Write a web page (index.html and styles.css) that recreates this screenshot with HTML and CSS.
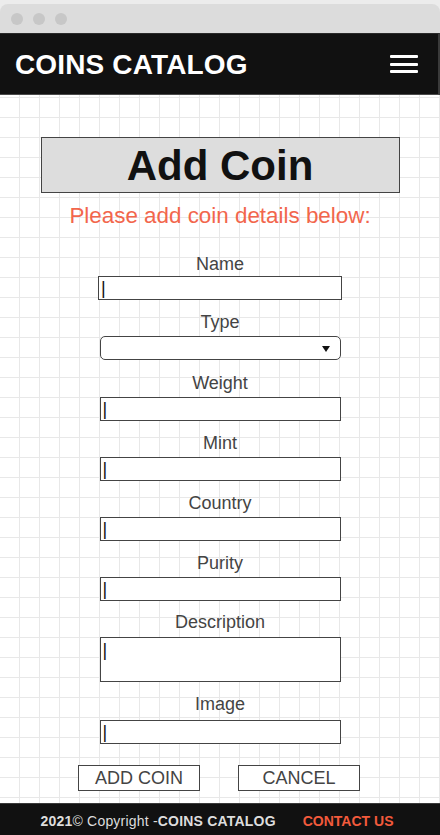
FILE: index.html
```html
<!DOCTYPE html>
<html lang="en">
<head>
<meta charset="utf-8">
<title>Coins Catalog - Add Coin</title>
<link rel="stylesheet" href="styles.css">
</head>
<body>
<div class="chrome">
  <span class="dot"></span><span class="dot"></span><span class="dot"></span>
</div>
<header class="topbar">
  <div class="brand">COINS CATALOG</div>
  <button class="menu" type="button" aria-label="Menu"><span></span><span></span><span></span></button>
</header>
<main class="content">
  <h1 class="title">Add Coin</h1>
  <p class="subtitle">Please add coin details below:</p>
  <form class="form">
    <div class="field field-name">
      <label class="label">Name</label>
      <input class="control control-name" type="text" placeholder="|">
    </div>
    <div class="field">
      <label class="label">Type</label>
      <div class="select-wrap"><select class="control select"><option></option></select></div>
    </div>
    <div class="field field-weight">
      <label class="label">Weight</label>
      <input class="control" type="text" placeholder="|">
    </div>
    <div class="field">
      <label class="label">Mint</label>
      <input class="control" type="text" placeholder="|">
    </div>
    <div class="field">
      <label class="label">Country</label>
      <input class="control" type="text" placeholder="|">
    </div>
    <div class="field">
      <label class="label">Purity</label>
      <input class="control" type="text" placeholder="|">
    </div>
    <div class="field field-desc">
      <label class="label">Description</label>
      <textarea class="control textarea" placeholder="|"></textarea>
    </div>
    <div class="field field-image">
      <label class="label">Image</label>
      <input class="control" type="text" placeholder="|">
    </div>
    <div class="actions">
      <button class="btn" type="button">ADD COIN</button>
      <button class="btn" type="button">CANCEL</button>
    </div>
  </form>
</main>
<footer class="footer">
  <span class="copy"><b>2021</b>© Copyright -<b>COINS CATALOG</b></span>
  <a class="contact" href="#">CONTACT US</a>
</footer>
</body>
</html>
```
FILE: styles.css
```css
* { box-sizing: border-box; }
html, body { margin: 0; padding: 0; }
body {
  height: 835px;
  display: flex;
  flex-direction: column;
  background: #ececec;
  font-family: "Liberation Sans", Arial, sans-serif;
  overflow: hidden;
}
.chrome {
  margin-top: 4px;
  height: 29px;
  flex-shrink: 0;
  background: #dcdcdc;
  border-radius: 8px 8px 0 0;
  display: flex;
  align-items: center;
  gap: 10px;
  padding-left: 11px;
}
.dot {
  width: 12px;
  height: 12px;
  border-radius: 50%;
  background: #c7c7c7;
}
.topbar {
  height: 62px;
  flex-shrink: 0;
  background: #111;
  border-top: 1px solid #2a2a2a;
  border-bottom: 1px solid #4a4a4a;
  border-right: 2px solid #3a3a3a;
  display: flex;
  align-items: center;
  justify-content: space-between;
  padding: 0 20px 0 15px;
}
.brand {
  color: #fff;
  font-weight: bold;
  font-size: 28px;
  line-height: 28px;
  padding-top: 2px;
  letter-spacing: 0.15px;
}
.menu {
  background: none;
  border: 0;
  padding: 0;
  width: 28px;
  display: flex;
  flex-direction: column;
  gap: 4.5px;
}
.menu span {
  display: block;
  height: 3px;
  width: 28px;
  background: #fff;
  border-radius: 1px;
}
.content {
  flex: 1;
  background-color: #fff;
  background-image:
    linear-gradient(#e8e8e8 1px, transparent 1px),
    linear-gradient(90deg, #e8e8e8 1px, transparent 1px);
  background-size: 20px 20px;
  background-position: -1px 2px;
  padding-top: 42px;
}
.title {
  margin: 0 auto;
  width: 359px;
  height: 56px;
  border: 1px solid #444;
  background: #ddd;
  color: #111;
  font-size: 42px;
  line-height: 56px;
  font-weight: bold;
  text-align: center;
}
.subtitle {
  margin: 10px 0 0;
  font-size: 22.4px;
  line-height: 25px;
  color: #f2664c;
  text-align: center;
}
.form {
  margin-top: 26px;
}
.field {
  margin-top: 12px;
  display: flex;
  flex-direction: column;
  align-items: center;
  gap: 4px;
}
.field-name { margin-top: 0; gap: 2px; }
.field-weight { margin-top: 13px; }
.field-desc { margin-top: 11px; gap: 5px; }
.field-image { gap: 6px; }
.label {
  display: block;
  font-size: 18px;
  line-height: 20px;
  color: #444;
  text-align: center;
}
.control {
  display: block;
  width: 241px;
  height: 24px;
  margin: 0;
  border: 1px solid #444;
  border-radius: 0;
  background: #fff;
  padding: 0 2px;
  font-family: "Liberation Sans", Arial, sans-serif;
  font-size: 18px;
  color: #111;
  outline: none;
}
.control::placeholder { color: #111; opacity: 1; }
.control-name { width: 244px; }
.textarea {
  height: 45px;
  resize: none;
  padding: 2px 2px;
  line-height: 20px;
  overflow: hidden;
}
.select-wrap {
  position: relative;
  width: 241px;
}
.select {
  appearance: none;
  -webkit-appearance: none;
  border-radius: 5px;
  width: 100%;
}
.select-wrap::after {
  content: "";
  position: absolute;
  right: 11px;
  top: 10px;
  border-left: 4px solid transparent;
  border-right: 4px solid transparent;
  border-top: 6px solid #111;
}
.actions {
  margin-top: 21px;
  display: flex;
  justify-content: center;
  gap: 38px;
  padding-right: 2px;
}
.btn {
  width: 122px;
  height: 26px;
  border: 1px solid #444;
  background: #fff;
  color: #444;
  font-family: "Liberation Sans", Arial, sans-serif;
  font-size: 18px;
  line-height: 24px;
  padding: 0;
}
.footer {
  height: 32px;
  flex-shrink: 0;
  background: #111;
  border-top: 1px solid #3a3a3a;
  display: flex;
  align-items: center;
  justify-content: center;
  gap: 27px;
  padding-top: 2px;
  padding-right: 6px;
  font-size: 14px;
  color: #ddd;
}
.copy { letter-spacing: 0.2px; }
.copy b { font-weight: bold; }
.contact {
  color: #f25a3c;
  font-weight: bold;
  text-decoration: none;
}
```
